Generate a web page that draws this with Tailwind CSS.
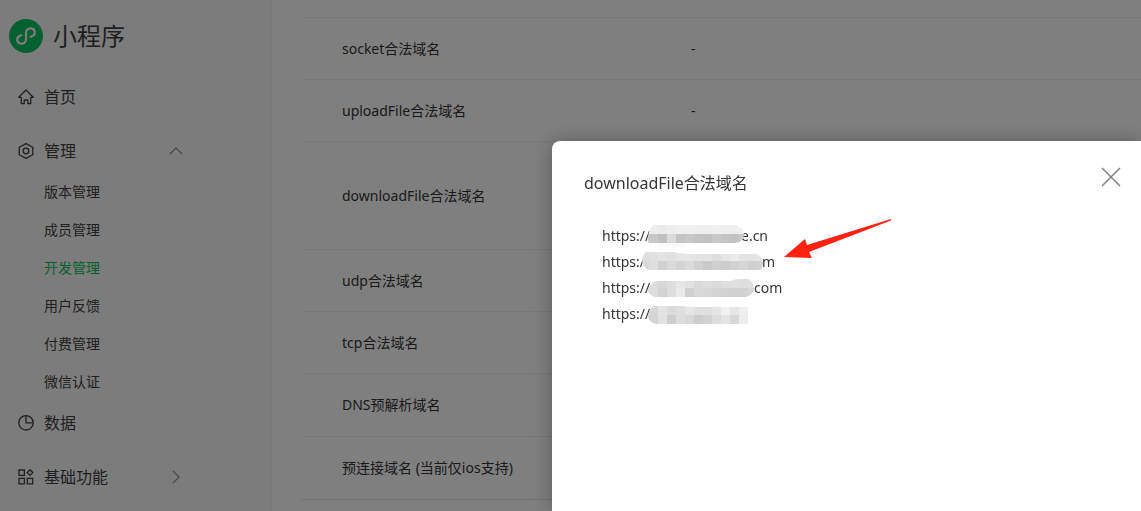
<!DOCTYPE html>
<html lang="zh-CN">
<head>
<meta charset="utf-8">
<meta name="viewport" content="width=device-width, initial-scale=1">
<title>小程序</title>
<script src="https://cdn.jsdelivr.net/npm/@tailwindcss/browser@4"></script>
</head>
<body class="h-screen overflow-hidden bg-white font-['Noto_Sans','Noto_Sans_CJK_SC',sans-serif] text-sm text-[#353535]">
<div class="flex h-full">
  <aside class="w-[272px] shrink-0 border-r border-[#f0f0f0] bg-[#f9f9f9] text-[#404040]">
    <div class="flex h-[75px] items-center gap-2.5 pl-[9px] pb-1">
      <svg class="size-[34px]" viewBox="0 0 34 34" fill="none" aria-hidden="true">
        <circle cx="17" cy="17" r="17" fill="#07c160"/>
        <path d="M12.2 16.3C9.6 16.9 8.2 18.8 8.2 20.8C8.2 23 10 24.7 12.500 24.7C15 24.7 17 22.8 17 20.3V13.7C17 11.2 19 9.3 21.5 9.3C24 9.3 25.8 11 25.8 13.2C25.8 15.2 24.4 17.1 21.8 17.7" stroke="#f9f9f9" stroke-width="2.3" stroke-linecap="round"/>
      </svg>
      <h1 class="text-2xl">小程序</h1>
    </div>
    <nav class="flex flex-col gap-2.5 text-base">
      <a href="#" class="flex h-11 items-center gap-2.5 pl-[18px]">
        <svg class="size-4" viewBox="0 0 16 16" fill="none" stroke="currentColor" stroke-width="1.3" stroke-linejoin="round" aria-hidden="true"><path d="M8 1L15.2 8.3H12.7V14.6H9.8V11H6.2V14.6H3.3V8.3H.8Z"/></svg>
        首页
      </a>
      <div>
        <button type="button" class="flex h-11 w-full items-center gap-2.5 pl-[18px]">
          <svg class="size-4" viewBox="0 0 16 16" fill="none" stroke="currentColor" stroke-width="1.3" stroke-linejoin="round" aria-hidden="true"><path d="M8 .6L14.8 4.2V11.8L8 15.4L1.2 11.8V4.2Z"/><circle cx="8" cy="8" r="2.8"/></svg>
          管理
          <svg class="mr-[87px] ml-auto size-4" viewBox="0 0 16 16" fill="none" stroke="#9a9a9a" stroke-width="1.3" aria-hidden="true"><path d="M2 11L8 5L14 11"/></svg>
        </button>
        <div class="flex flex-col text-sm">
          <a href="#" class="flex h-[38px] items-center pl-11">版本管理</a>
          <a href="#" class="flex h-[38px] items-center pl-11">成员管理</a>
          <a href="#" class="flex h-[38px] items-center pl-11 text-[#07c160]">开发管理</a>
          <a href="#" class="flex h-[38px] items-center pl-11">用户反馈</a>
          <a href="#" class="flex h-[38px] items-center pl-11">付费管理</a>
          <a href="#" class="flex h-[38px] items-center pl-11">微信认证</a>
        </div>
        <a href="#" class="flex h-11 items-center gap-2.5 pl-[18px]">
          <svg class="size-4" viewBox="0 0 16 16" fill="none" stroke="currentColor" stroke-width="1.3" aria-hidden="true"><circle cx="8" cy="7.8" r="7.2"/><path d="M8 .6V7.8H15.2"/></svg>
          数据
        </a>
      </div>
      <button type="button" class="flex h-11 items-center gap-2.5 pl-[18px]">
        <svg class="size-4" viewBox="0 0 16 16" fill="none" stroke="currentColor" stroke-width="1.3" aria-hidden="true"><path d="M1 1H6.4V6.4H1ZM1 9.4H6.4V14.8H1ZM9.3 9.4H14.7V14.8H9.3ZM12 .8L14.8 3.6L12 6.4L9.2 3.6Z"/></svg>
        基础功能
        <svg class="mr-[87px] ml-auto size-4" viewBox="0 0 16 16" fill="none" stroke="#9a9a9a" stroke-width="1.3" aria-hidden="true"><path d="M5 2L11 8L5 14"/></svg>
      </button>
    </nav>
  </aside>
  <main class="min-w-0 flex-1 pt-[17px] pl-[30px]">
    <table class="w-full table-fixed border-separate border-spacing-0 border-t border-[#eeeeee] text-left">
      <colgroup><col class="w-[389px]"><col></colgroup>
      <tbody>
        <tr class="h-[62px]"><th scope="row" class="border-b border-[#eeeeee] pl-10 font-normal">socket合法域名</th><td class="border-b border-[#eeeeee]">-</td></tr>
        <tr class="h-[62px]"><th scope="row" class="border-b border-[#eeeeee] pl-10 font-normal">uploadFile合法域名</th><td class="border-b border-[#eeeeee]">-</td></tr>
        <tr class="h-[108px]"><th scope="row" class="border-b border-[#eeeeee] pl-10 font-normal">downloadFile合法域名</th><td class="border-b border-[#eeeeee]"></td></tr>
        <tr class="h-[62px]"><th scope="row" class="border-b border-[#eeeeee] pl-10 font-normal">udp合法域名</th><td class="border-b border-[#eeeeee]"></td></tr>
        <tr class="h-[62px]"><th scope="row" class="border-b border-[#eeeeee] pl-10 font-normal">tcp合法域名</th><td class="border-b border-[#eeeeee]"></td></tr>
        <tr class="h-[63px]"><th scope="row" class="border-b border-[#eeeeee] pl-10 font-normal">DNS预解析域名</th><td class="border-b border-[#eeeeee]"></td></tr>
        <tr class="h-[63px]"><th scope="row" class="border-b border-[#e2e2e2] pl-10 font-normal">预连接域名 (当前仅ios支持)</th><td class="border-b border-[#e2e2e2]"></td></tr>
      </tbody>
    </table>
  </main>
</div>

<div class="fixed inset-0 bg-black/50"></div>

<section role="dialog" aria-labelledby="dialog-title" class="fixed top-[141px] right-0 bottom-0 left-[552px] rounded-tl-lg bg-white pt-6 pr-5 pl-8 shadow-[0_1px_20px_rgba(0,0,0,0.3)]">
  <header class="flex items-start justify-between">
    <h2 id="dialog-title" class="pt-1 text-base/7">downloadFile合法域名</h2>
    <button type="button" aria-label="关闭" class="text-[#808080]">
      <svg class="size-6" viewBox="0 0 24 24" fill="none" stroke="currentColor" stroke-width="1.5" aria-hidden="true"><path d="M5 3L23 21M23 3L5 21"/></svg>
    </button>
  </header>
  <ul class="mt-[26px] pl-[18px] text-sm/[26px]">
    <li class="flex"><span class="w-[139px]">https://</span><span>e.cn</span></li>
    <li class="flex"><span class="w-[160px]">https://</span><span>m</span></li>
    <li class="flex"><span class="w-[152px]">https://</span><span>com</span></li>
    <li class="flex"><span>https://</span></li>
  </ul>
  <svg class="absolute top-[84px] left-[88px] h-[99px] w-[126px]" viewBox="0 0 126 99" shape-rendering="crispEdges" aria-hidden="true">
    <defs>
      <clipPath id="m1"><path d="M14 0H95Q104 2 104 10Q103 18 94 18H9Q7 16 8 12Q9 3 14 0Z"/></clipPath>
      <clipPath id="m2"><path d="M6 27H34Q42 29 54 29H116Q123 31 123 39L121 45H10Q2 43 2 35Q3 29 6 27Z"/></clipPath>
      <clipPath id="m3"><path d="M16 56H90Q95 54 99 54H108Q114 56 114 64Q113 70 106 72H15Q8 70 8 65Q9 59 16 56Z"/></clipPath>
      <clipPath id="m4"><path d="M14 81H42L50 82H108V99H16Q8 97 8 91Q9 83 14 81Z"/></clipPath>
    </defs>
    <path d="M18 18H46V23H34V25H18Z" fill="#fbfbfb"/>
    <g id="mosaic"></g>
  </svg>
  <svg class="absolute top-[77px] left-[230px] h-[43px] w-[111px]" viewBox="0 0 111 43" aria-hidden="true"><path d="M2 39L23 21L25 27L109 1L109 2.500L27 34L30 40Z" fill="#ff2213"/></svg>
</section>
<script>
  // Greys of the 9px blocks that cover each domain, top row then bottom row.
  const rows = [
    ['m1', 0, ['ededed','ededed','ebebeb','eeeeee','f1f1f1','f0f0f0','efefef','efefef','f0f0f0','efefef','efefef','efefef']],
    ['m1', 9, ['cccccc','c8c8c8','c0c0c0','dadada','c4c4c4','c8c8c8','c3c3c3','c1c1c1','c9c9c9','c4c4c4','c2c2c2','cacaca']],
    ['m2', 27, ['dedede','e0e0e0','e4e4e4','e2e2e2','e6e6e6','e6e6e6','e4e4e4','e4e4e4','dedede','e6e6e6','ebebeb','e4e4e4','e4e4e4','e6e6e6']],
    ['m2', 36, ['d8d8d8','dedede','d0d0d0','dadada','d4d4d4','dadada','d1d1d1','c9c9c9','d0d0d0','cdcdcd','d2d2d2','d6d6d6','d0d0d0','d3d3d3']],
    ['m3', 54, ['dddddd','dcdcdc','d8d8d8','dddddd','e6e6e6','e2e2e2','d9d9d9','dedede','dadada','dedede','e0e0e0','dedede','e0e0e0']],
    ['m3', 63, ['dddddd','dedede','d2d2d2','dedede','ebebeb','d0d0d0','d8d8d8','d7d7d7','d4d4d4','d2d2d2','d1d1d1','d2d2d2','d6d6d6']],
    ['m4', 81, ['d4d4d4','d6d6d6','e4e4e4','dadada','dedede','e6e6e6','e0e0e0','e0e0e0','e4e4e4','f0f0f0','e6e6e6','efefef']],
    ['m4', 90, ['d2d2d2','d4d4d4','e2e2e2','cdcdcd','dedede','d8d8d8','cdcdcd','d2d2d2','dedede','e4e4e4','d8d8d8','ededed']]
  ];
  document.getElementById('mosaic').innerHTML = rows.map(([clip, y, greys]) =>
    `<g clip-path="url(#${clip})">` + greys.map((g, i) => `<rect x="${i * 9}" y="${y}" width="9" height="9" fill="#${g}"/>`).join('') + '</g>').join('');
</script>
</body>
</html>
